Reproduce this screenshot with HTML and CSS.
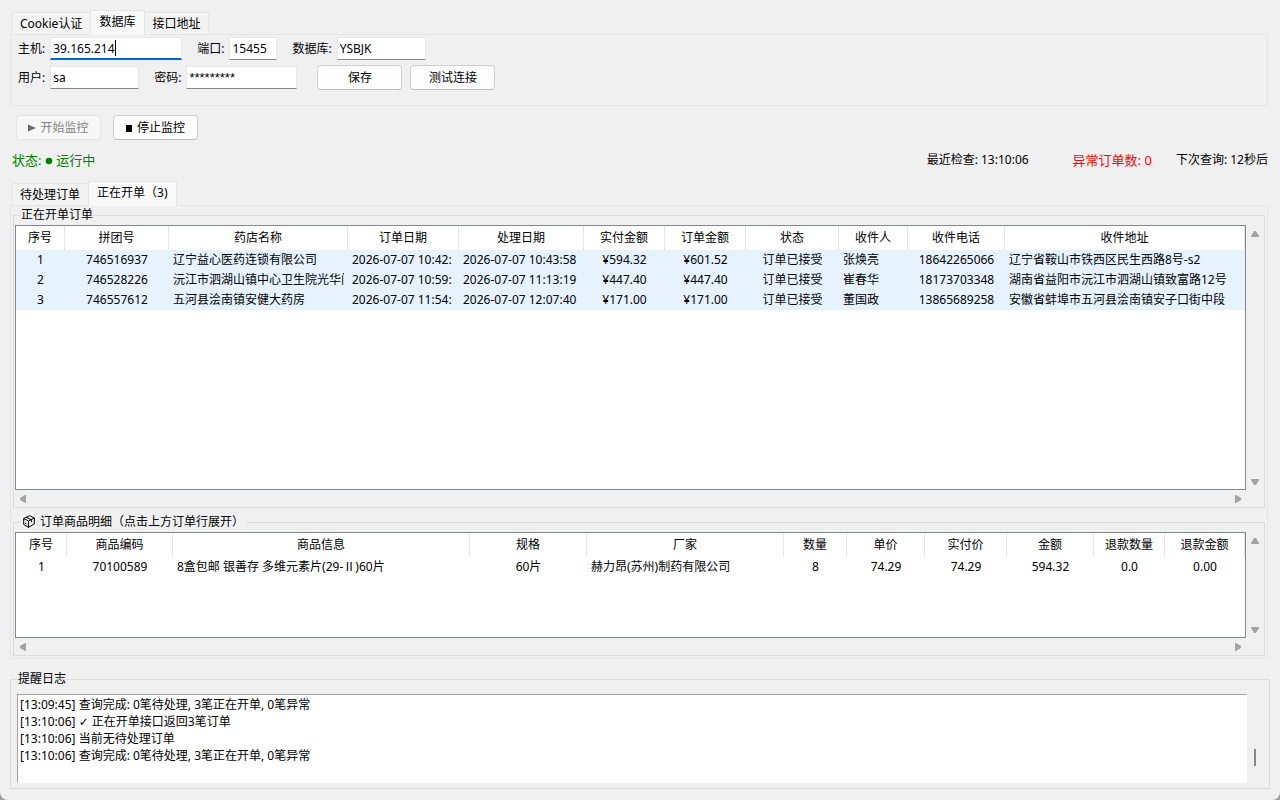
FILE: index.html
```html
<!DOCTYPE html>
<html lang="zh-CN">
<head>
<meta charset="UTF-8">
<title>订单监控</title>
<link rel="stylesheet" href="styles.css">
</head>
<body>

<div class="window">

	<!-- 连接设置 -->
	<div class="tabs">
		<button type="button" class="tab">Cookie认证</button>
		<button type="button" class="tab active">数据库</button>
		<button type="button" class="tab">接口地址</button>
	</div>
	<form class="pane settings">
		<div class="row">
			<label for="txtHost">主机:</label>
			<span class="field host focused">
				<input type="text" id="txtHost" value="39.165.214">
				<span class="caret"></span>
			</span>
			<label for="txtPort">端口:</label>
			<span class="field port"><input type="text" id="txtPort" value="15455"></span>
			<label for="txtDb">数据库:</label>
			<span class="field"><input type="text" id="txtDb" value="YSBJK"></span>
		</div>
		<div class="row">
			<label for="txtUser">用户:</label>
			<span class="field"><input type="text" id="txtUser" value="sa"></span>
			<label for="txtPwd">密码:</label>
			<span class="field pwd"><input type="text" id="txtPwd" value="*********"></span>
			<div class="formBtns">
				<button type="button" class="btn">保存</button>
				<button type="button" class="btn">测试连接</button>
			</div>
		</div>
	</form>

	<!-- 监控按钮 -->
	<div class="actions">
		<button type="button" class="btn" disabled>
			<svg width="8" height="8" viewBox="0 0 8 8"><path d="M0 0.5L8 4L0 7.5Z" fill="currentColor"/></svg>
			开始监控
		</button>
		<button type="button" class="btn">
			<svg width="7" height="8" viewBox="0 0 7 8"><path d="M0 1H6V8H0Z" fill="currentColor"/></svg>
			停止监控
		</button>
	</div>

	<div class="status">
		<span class="running">状态: <svg width="8" height="8" viewBox="0 0 8 8"><circle cx="4" cy="4" r="3.3" fill="currentColor"/></svg> 运行中</span>
		<span class="lastCheck">最近检查: 13:10:06</span>
		<span class="errCount">异常订单数: 0</span>
		<span>下次查询: 12秒后</span>
	</div>

	<!-- 订单列表 -->
	<div class="tabs">
		<button type="button" class="tab">待处理订单</button>
		<button type="button" class="tab active">正在开单（3)</button>
	</div>
	<div class="pane orders">
		<fieldset class="group listGroup">
			<legend>正在开单订单</legend>
			<div class="tree">
				<table class="orderTbl">
					<colgroup>
						<col class="oNo"><col class="oGroup"><col class="oShop"><col class="oDate"><col class="oHandled">
						<col class="oAmt"><col class="oAmt"><col class="oState"><col class="oName"><col class="oTel"><col>
					</colgroup>
					<thead>
						<tr>
							<th>序号</th>
							<th>拼团号</th>
							<th>药店名称</th>
							<th>订单日期</th>
							<th>处理日期</th>
							<th>实付金额</th>
							<th>订单金额</th>
							<th>状态</th>
							<th>收件人</th>
							<th>收件电话</th>
							<th>收件地址</th>
						</tr>
					</thead>
					<tbody>
						<tr>
							<td>1</td>
							<td>746516937</td>
							<td class="left">辽宁益心医药连锁有限公司</td>
							<td class="left">2026-07-07 10:42:</td>
							<td class="left">2026-07-07 10:43:58</td>
							<td>¥594.32</td>
							<td>¥601.52</td>
							<td>订单已接受</td>
							<td class="left">张焕亮</td>
							<td>18642265066</td>
							<td class="left">辽宁省鞍山市铁西区民生西路8号-s2</td>
						</tr>
						<tr>
							<td>2</td>
							<td>746528226</td>
							<td class="left">沅江市泗湖山镇中心卫生院光华门</td>
							<td class="left">2026-07-07 10:59:</td>
							<td class="left">2026-07-07 11:13:19</td>
							<td>¥447.40</td>
							<td>¥447.40</td>
							<td>订单已接受</td>
							<td class="left">崔春华</td>
							<td>18173703348</td>
							<td class="left">湖南省益阳市沅江市泗湖山镇致富路12号</td>
						</tr>
						<tr>
							<td>3</td>
							<td>746557612</td>
							<td class="left">五河县浍南镇安健大药房</td>
							<td class="left">2026-07-07 11:54:</td>
							<td class="left">2026-07-07 12:07:40</td>
							<td>¥171.00</td>
							<td>¥171.00</td>
							<td>订单已接受</td>
							<td class="left">董国政</td>
							<td>13865689258</td>
							<td class="left">安徽省蚌埠市五河县浍南镇安子口街中段</td>
						</tr>
					</tbody>
				</table>
			</div>
			<div class="vbar">
				<svg width="8" height="6" viewBox="0 0 8 6"><path d="M3 0H5L8 5V6H0V5Z" fill="#a3a3a3"/></svg>
				<svg width="8" height="6" viewBox="0 0 8 6"><path d="M0 0H8V1L5 6H3L0 1Z" fill="#a3a3a3"/></svg>
			</div>
			<div class="hbar">
				<svg width="6" height="8" viewBox="0 0 6 8"><path d="M6 0V8H5L0 5V3L5 0Z" fill="#a3a3a3"/></svg>
				<svg width="6" height="8" viewBox="0 0 6 8"><path d="M0 0V8H1L6 5V3L1 0Z" fill="#a3a3a3"/></svg>
			</div>
		</fieldset>

		<fieldset class="group detailGroup">
			<legend>
				<svg class="box" width="12" height="13" viewBox="0 0 12 13" fill="none" stroke="#000">
					<path d="M0.7 3.5L6.5 0.7L11.3 3V9L5.5 12.3L0.7 9.5Z"/>
					<path d="M0.7 3.5L5.5 6L11.3 3M5.5 6V12.3M3.2 2.3L8.4 4.8V7.2M2 8L3.5 9"/>
				</svg>
				订单商品明细（点击上方订单行展开）
			</legend>
			<div class="tree">
				<table class="itemTbl">
					<colgroup>
						<col class="iNo"><col class="iCode"><col class="iInfo"><col class="iSpec"><col class="iMaker">
						<col class="iQty"><col class="iPrice"><col class="iPaid"><col class="iSum"><col class="iBackQty"><col>
					</colgroup>
					<thead>
						<tr>
							<th>序号</th>
							<th>商品编码</th>
							<th>商品信息</th>
							<th>规格</th>
							<th>厂家</th>
							<th>数量</th>
							<th>单价</th>
							<th>实付价</th>
							<th>金额</th>
							<th>退款数量</th>
							<th>退款金额</th>
						</tr>
					</thead>
					<tbody>
						<tr>
							<td>1</td>
							<td>70100589</td>
							<td class="left">8盒包邮 银善存 多维元素片(29-Ⅱ)60片</td>
							<td>60片</td>
							<td class="left">赫力昂(苏州)制药有限公司</td>
							<td>8</td>
							<td>74.29</td>
							<td>74.29</td>
							<td>594.32</td>
							<td>0.0</td>
							<td>0.00</td>
						</tr>
					</tbody>
				</table>
			</div>
			<div class="vbar">
				<svg width="8" height="6" viewBox="0 0 8 6"><path d="M3 0H5L8 5V6H0V5Z" fill="#a3a3a3"/></svg>
				<svg width="8" height="6" viewBox="0 0 8 6"><path d="M0 0H8V1L5 6H3L0 1Z" fill="#a3a3a3"/></svg>
			</div>
			<div class="hbar">
				<svg width="6" height="8" viewBox="0 0 6 8"><path d="M6 0V8H5L0 5V3L5 0Z" fill="#a3a3a3"/></svg>
				<svg width="6" height="8" viewBox="0 0 6 8"><path d="M0 0V8H1L6 5V3L1 0Z" fill="#a3a3a3"/></svg>
			</div>
		</fieldset>
	</div>

	<!-- 日志 -->
	<fieldset class="group logGroup">
		<legend><label for="txtLog">提醒日志</label></legend>
		<textarea id="txtLog" class="log" readonly>
[13:09:45] 查询完成: 0笔待处理, 3笔正在开单, 0笔异常
[13:10:06] ✓ 正在开单接口返回3笔订单
[13:10:06] 当前无待处理订单
[13:10:06] 查询完成: 0笔待处理, 3笔正在开单, 0笔异常</textarea>
		<div class="logBar"><div class="thumb"></div></div>
	</fieldset>

</div>

</body>
</html>
```
FILE: styles.css
```css
* { box-sizing: border-box; }
html { background-color: #a0a0a0; }
body
{
	margin: 0;
	font-family: "Noto Sans", "Noto Sans CJK SC", sans-serif;
	font-size: 12px;
	line-height: 16px;
	color: #000;
}
button, input, textarea { font: inherit; color: inherit; }
svg { display: inline-block; }

.window
{
	display: flex;
	flex-direction: column;
	min-height: 100vh;
	padding: 10px 10px 11px;
	background-color: #f0f0f0;
	border-radius: 0 0 8px 8px;
}

/* 选项卡 */
.tabs { display: flex; align-items: flex-end; padding-left: 2px; }
.tab
{
	height: 22px;
	margin: 0 -1px 0 0;
	padding: 0 8px 0 7px;
	border: 1px solid #e5e5e5;
	border-bottom: 0;
	background-color: #f3f3f3;
	white-space: nowrap;
}
.tab.active
{
	height: 25px;
	margin-bottom: -1px;
	padding: 0 9px 2px 8px;
	background-color: #f9f9f9;
	z-index: 1;
}
.pane
{
	margin-right: 2px;
	border: 1px solid #e5e5e5;
}

/* 连接设置 */
.settings { padding: 1px 7px 15px; }
.row { display: flex; align-items: center; height: 25px; }
.row + .row { margin-top: 4px; }
.row label { margin-right: 5px; white-space: nowrap; }
.field { position: relative; width: 89px; margin-right: 15px; }
.field input
{
	display: block;
	width: 100%;
	height: 23px;
	padding: 0 2px;
	border: 1px solid #e8e8e8;
	border-bottom-color: #868686;
	background-color: #fff;
	outline: 0;
}
.field.host { width: 132px; }
.field.port { width: 48px; }
.field.pwd { width: 111px; margin-right: 20px; }
.field.pwd input { font-family: "Liberation Sans", sans-serif; font-size: 13px; }
.field.focused input { border-bottom: 2px solid #0067c0; }
.caret { position: absolute; left: 65px; top: 3px; width: 1px; height: 16px; background-color: #000; }
.formBtns { display: flex; gap: 8px; }

.btn
{
	display: flex;
	align-items: center;
	justify-content: center;
	gap: 4px;
	width: 85px;
	height: 25px;
	padding: 0;
	border: 1px solid #d0d0d0;
	border-bottom-color: #bcbcbc;
	border-radius: 4px;
	background-color: #fdfdfd;
}
.btn:disabled { color: #838383; border-color: #e5e5e5; background-color: #f7f7f7; }
.btn:disabled svg { color: #6d6d6d; }

.actions { display: flex; gap: 12px; padding: 9px 6px 0; }

/* 状态栏 */
.status { display: flex; align-items: center; height: 20px; margin: 10px 2px 11px; }
.running { margin-right: auto; font-size: 13px; color: #008000; }
.lastCheck { margin-right: 44px; }
.errCount { margin-right: 24px; font-size: 13px; color: #f00; }

/* 分组框 */
.group { min-width: 0; margin: 0; padding: 0; border: 1px solid #dcdcdc; }
.group legend { margin-left: 6px; padding: 0; height: 16px; line-height: 16px; }
.orders { flex: 1; display: flex; flex-direction: column; gap: 6px; padding: 1px 2px 2px; }
.listGroup, .detailGroup
{
	display: grid;
	grid-template-columns: minmax(0, 1fr) 18px;
	padding: 2px 0 0 1px;
}
.listGroup { flex: 1; grid-template-rows: minmax(265px, 1fr) 17px; }
.detailGroup { grid-template-rows: minmax(106px, 1fr) 17px; }
.detailGroup legend { padding: 0 2px; }
.box { vertical-align: -2px; margin-right: 2px; }

.tree { border: 1px solid #828790; background-color: #fff; overflow: hidden; }
.tree table { width: 100%; table-layout: fixed; border-spacing: 0; }
.tree th
{
	height: 24px;
	padding: 0;
	border-right: 1px solid #e5e5e5;
	font-weight: normal;
	white-space: nowrap;
}
.tree td
{
	height: 20px;
	padding: 0;
	border: solid transparent;
	border-width: 0 4px;
	text-align: center;
	white-space: nowrap;
	overflow: hidden;
}
.tree td.left { text-align: left; }
.orderTbl tbody tr { background-color: #e6f3ff; }

.oNo { width: 49px; }
.oGroup { width: 104px; }
.oShop { width: 179px; }
.oDate { width: 111px; }
.oHandled { width: 125px; }
.oAmt { width: 81px; }
.oState { width: 93px; }
.oName { width: 69px; }
.oTel { width: 97px; }

.iNo { width: 51px; }
.iCode { width: 106px; }
.iInfo { width: 297px; }
.iSpec { width: 117px; }
.iMaker { width: 197px; }
.iQty { width: 63px; }
.iPrice { width: 78px; }
.iPaid { width: 82px; }
.iSum { width: 87px; }
.iBackQty { width: 71px; }

/* 滚动条 */
.vbar, .hbar { display: flex; justify-content: space-between; align-items: center; }
.vbar { flex-direction: column; padding: 6px 0 5px; }
.hbar { padding: 0 5px; }

/* 日志 */
.logGroup { display: flex; margin-top: 12px; padding: 7px 6px 5px; }
.logGroup legend { margin-left: 1px; }
.log
{
	flex: 1;
	height: 89px;
	padding: 1px 2px;
	border: 1px solid #fff;
	border-top-color: #a0a0a0;
	border-left-color: #a0a0a0;
	background-color: #fff;
	font-family: "Noto Sans", "DejaVu Sans", "Noto Sans CJK SC", sans-serif;
	line-height: 17px;
	resize: none;
	outline: 0;
	overflow: hidden;
}
.logBar { display: flex; align-items: flex-end; width: 16px; padding: 0 7px 17px; }
.thumb { width: 2px; height: 17px; background-color: #868686; }
```
